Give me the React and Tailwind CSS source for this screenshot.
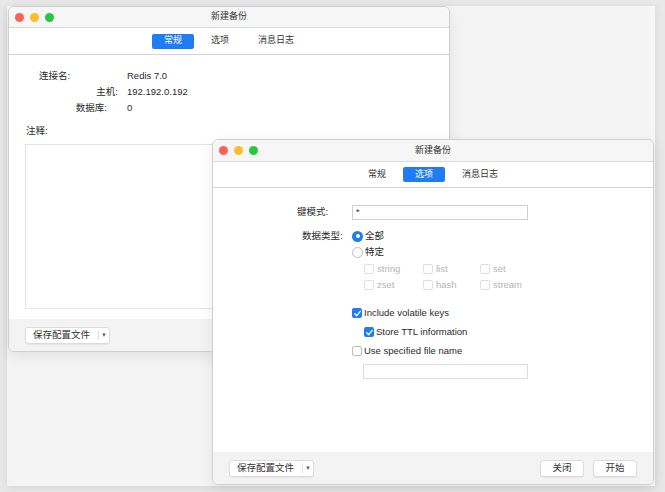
import React from 'react'

const FONT = { fontFamily: '"Liberation Sans", "Noto Sans CJK SC", sans-serif' }

const Lights = () => (
    <div className="absolute left-[6px] top-0 h-full flex items-center gap-[6px]">
        <div className="w-[9px] h-[9px] rounded-full bg-[#fe5f57]" />
        <div className="w-[9px] h-[9px] rounded-full bg-[#febc2e]" />
        <div className="w-[9px] h-[9px] rounded-full bg-[#28c840]" />
    </div>
)

const Tabs = ({ active, height }) => (
    <div className={`flex items-center justify-center gap-[5px] bg-white border-b border-[#d2d2d2] ${height}`}>
        {['常规', '选项', '消息日志'].map(t => (
            <div
                key={t}
                className={`h-[15px] px-[12px] flex items-center rounded-[2px] text-[9px] ${t === active ? 'bg-[#1f7cf2] text-white' : 'text-[#333]'}`}
            >
                {t}
            </div>
        ))}
    </div>
)

const SaveButton = () => (
    <div className="h-[17px] w-[85px] bg-white rounded-[3px] border border-[#dcdcdc] shadow-[0_1px_1px_rgba(0,0,0,0.06)] flex items-center text-[9.5px] text-[#333]">
        <span className="pl-[7px] w-[72px]">保存配置文件</span>
        <span className="h-[10px] w-px bg-[#e2e2e2]" />
        <span className="flex-1 flex justify-center text-[6px] text-[#666]">▼</span>
    </div>
)

const Window = ({ className, titleH, tabH, active, children, footerRight }) => (
    <div className={`absolute w-[442px] h-[346px] rounded-[6px] border border-[#cfcfcf] overflow-hidden flex flex-col shadow-[0_4px_14px_rgba(0,0,0,0.08)] ${className}`}>
        <div className={`relative shrink-0 bg-[#f6f6f6] border-b border-[#dadada] flex items-center justify-center text-[9px] text-[#333] ${titleH}`}>
            <Lights />
            新建备份
        </div>
        <Tabs active={active} height={tabH} />
        <div className="flex-1 bg-white">{children}</div>
        <div className="h-[32px] shrink-0 bg-[#f3f3f3] flex items-center px-[16px]">
            <SaveButton />
            <div className="flex-1" />
            {footerRight}
        </div>
    </div>
)

const Check = ({ checked, disabled }) => (
    <div className={`w-[10px] h-[10px] rounded-[2px] flex items-center justify-center shrink-0 ${checked ? 'bg-[#1f7cf2]' : disabled ? 'bg-white border border-[#e0e0e0]' : 'bg-white border border-[#bdbdbd]'}`}>
        {checked && (
            <svg viewBox="0 0 10 10" className="w-[9px] h-[9px]">
                <path d="M2 5.2 L4.2 7.4 L8 2.6" fill="none" stroke="white" strokeWidth="1.6" strokeLinecap="round" strokeLinejoin="round" />
            </svg>
        )}
    </div>
)

const Radio = ({ checked }) => (
    <div className={`w-[11px] h-[11px] rounded-full flex items-center justify-center shrink-0 ${checked ? 'bg-[#1f7cf2]' : 'bg-white border border-[#bdbdbd]'}`}>
        {checked && <div className="w-[4px] h-[4px] rounded-full bg-white" />}
    </div>
)

const TypeBox = ({ label, w }) => (
    <div className={`flex items-center gap-[3px] ${w}`}>
        <Check disabled />
        <span className="text-[#b4b4b4]">{label}</span>
    </div>
)

export default function App() {
    return (
        <div className="relative w-[665px] h-[492px] bg-[#e8e8e8] overflow-hidden text-[9.5px] text-[#2a2a2a]" style={FONT}>
            {/* window behind */}
            <div className="absolute left-[7px] top-[6px] w-[648px] h-[480px] bg-[#f4f4f4] border-r-[5px] border-[#f7f7f7] shadow-[0_2px_8px_rgba(0,0,0,0.08)]" />

            {/* first window */}
            <Window className="left-[8px] top-[6px]" titleH="h-[21px]" tabH="h-[27px]" active="常规">
                <div className="flex flex-col pt-[13px] pl-[16px] pr-[17px]">
                    <div className="flex h-[16px] items-center">
                        <span className="w-[102px] pl-[14px]">连接名:</span>
                        <span>Redis 7.0</span>
                    </div>
                    <div className="flex h-[16px] items-center">
                        <span className="w-[102px] pr-[9px] text-right">主机:</span>
                        <span>192.192.0.192</span>
                    </div>
                    <div className="flex h-[16px] items-center">
                        <span className="w-[102px] pr-[20px] text-right">数据库:</span>
                        <span>0</span>
                    </div>
                    <div className="mt-[8px] h-[14px] flex items-center pl-px">注释:</div>
                    <div className="mt-[6px] h-[165px] border border-[#e3e3e3] bg-white" />
                </div>
            </Window>

            {/* second window */}
            <Window
                className="left-[212px] top-[139px]"
                titleH="h-[22px]"
                tabH="h-[26px]"
                active="选项"
                footerRight={
                    <div className="flex gap-[9px]">
                        {['关闭', '开始'].map(t => (
                            <div key={t} className="h-[17px] w-[44px] bg-white rounded-[3px] border border-[#dcdcdc] shadow-[0_1px_1px_rgba(0,0,0,0.06)] flex items-center justify-center text-[9.5px] text-[#333]">
                                {t}
                            </div>
                        ))}
                    </div>
                }
            >
                <div className="flex flex-col pt-[17px]">
                    <div className="flex h-[15px] items-center">
                        <span className="w-[139px] pl-[84px]">键模式:</span>
                        <div className="w-[176px] h-[15px] border border-[#cfcfcf] bg-white flex items-center pl-[3px] text-[9px]">*</div>
                    </div>
                    <div className="mt-[8px] flex h-[16px] items-center">
                        <span className="w-[139px] pl-[89px]">数据类型:</span>
                        <Radio checked />
                        <span className="ml-[2px]">全部</span>
                    </div>
                    <div className="flex h-[16px] items-center pl-[139px]">
                        <Radio />
                        <span className="ml-[2px]">特定</span>
                    </div>
                    <div className="flex h-[16px] items-center pl-[151px] mt-px">
                        <TypeBox label="string" w="w-[59px]" />
                        <TypeBox label="list" w="w-[57px]" />
                        <TypeBox label="set" w="w-[60px]" />
                    </div>
                    <div className="flex h-[16px] items-center pl-[151px]">
                        <TypeBox label="zset" w="w-[59px]" />
                        <TypeBox label="hash" w="w-[57px]" />
                        <TypeBox label="stream" w="w-[60px]" />
                    </div>
                    <div className="mt-[12px] flex h-[16px] items-center gap-[2px] pl-[139px]">
                        <Check checked />
                        <span>Include volatile keys</span>
                    </div>
                    <div className="mt-[3px] flex h-[16px] items-center gap-[2px] pl-[151px]">
                        <Check checked />
                        <span>Store TTL information</span>
                    </div>
                    <div className="mt-[3px] flex h-[16px] items-center gap-[2px] pl-[139px]">
                        <Check />
                        <span>Use specified file name</span>
                    </div>
                    <div className="mt-[5px] ml-[150px] w-[165px] h-[15px] border border-[#dcdcdc] bg-white" />
                </div>
            </Window>
        </div>
    )
}
